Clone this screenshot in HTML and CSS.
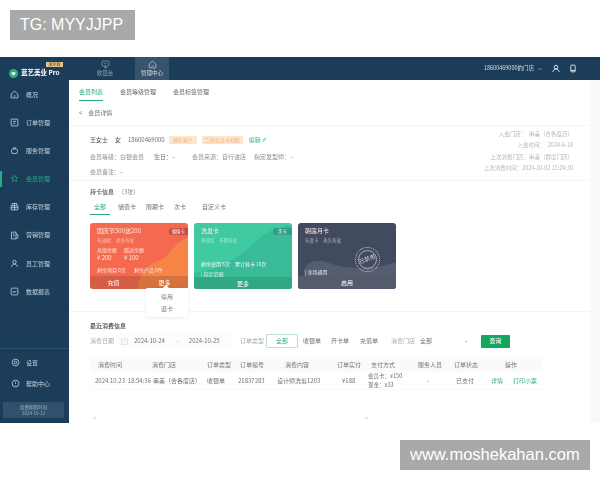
FILE: index.html
```html
<!DOCTYPE html>
<html lang="zh-CN">
<head>
<meta charset="utf-8">
<title>会员详情</title>
<link rel="stylesheet" href="styles.css">
</head>
<body>
<div class="mark mark-tg">TG: MYYJJPP</div>
<div class="app">
  <header class="topbar">
    <div class="brand">
      <svg class="brand-logo" viewBox="0 0 10 10"><circle cx="5" cy="5" r="5" fill="#27b083"/><path d="M2.800 3.600h4.400L6.600 6 5 7 3.400 6z" fill="#fff"/></svg>
      <span class="brand-name">蓝艺美业 Pro</span>
      <span class="brand-badge">演示版</span>
    </div>
    <nav class="top-tabs">
      <div class="top-tab">
        <svg class="top-icon" viewBox="0 0 12 12"><rect x="1.500" y="1.500" width="9" height="6.500" rx=".8"/><path d="M4 10.500h4M6 8v2.500M4.500 4l1.500 1.500L7.500 4"/></svg>
        <span>收银台</span>
      </div>
      <div class="top-tab top-tab-on">
        <svg class="top-icon" viewBox="0 0 12 12"><path d="M1.500 5.500 6 1.500l4.500 4v5h-9zM4.500 8h3"/></svg>
        <span>管理中心</span>
      </div>
    </nav>
    <div class="top-right">
      <span>18600469000的门店</span>
      <svg class="chev" viewBox="0 0 8 8"><path d="m1.500 3 2.500 2 2.500-2"/></svg>
      <svg class="top-tool" viewBox="0 0 10 10"><circle cx="5" cy="3.200" r="2.300"/><path d="M1 9.500c.4-2.500 2-3.800 4-3.800s3.600 1.300 4 3.800"/></svg>
      <svg class="top-tool" viewBox="0 0 10 10"><rect x="2.300" y=".8" width="5.400" height="8.400" rx=".8"/><path d="M2.300 7.500h5.400"/></svg>
    </div>
  </header>
  <div class="body">
    <aside class="side">
      <ul class="menu">
        <li class="menu-item"><svg class="menu-icon" viewBox="0 0 12 12"><path d="M1.500 5.500 6 1.500l4.500 4v5h-9zM4.500 8h3"/></svg>概况</li>
        <li class="menu-item"><svg class="menu-icon" viewBox="0 0 12 12"><rect x="1.500" y="1.500" width="9" height="9" rx=".6"/><path d="M4 4.500h4M4 7h3"/></svg>订单管理</li>
        <li class="menu-item"><svg class="menu-icon" viewBox="0 0 12 12"><rect x="2" y="4" width="8" height="6" rx="2.200"/><path d="M4.500 4V2.500h3V4"/></svg>服务管理</li>
        <li class="menu-item menu-on"><svg class="menu-icon" viewBox="0 0 12 12"><path d="m6 1.500 1.300 3 3.200.3-2.400 2.100.7 3.100L6 8.400 3.200 10l.7-3.100L1.500 4.800l3.200-.3z"/></svg>会员管理</li>
        <li class="menu-item"><svg class="menu-icon" viewBox="0 0 12 12"><path d="M1.500 5h9v5.500h-9zM3 5V2h6v3M6 2v8.500M1.500 7.500h9"/></svg>库存管理</li>
        <li class="menu-item"><svg class="menu-icon" viewBox="0 0 12 12"><path d="M2 1.500h6v9H2zM8 4l2.500 1v4L8 10M4 4h2M4 6.500h2"/></svg>营销管理</li>
        <li class="menu-item"><svg class="menu-icon" viewBox="0 0 12 12"><circle cx="6" cy="4" r="2.300"/><path d="M2 10.500c.5-2.300 2-3.500 4-3.500s3.500 1.200 4 3.500"/></svg>员工管理</li>
        <li class="menu-item"><svg class="menu-icon" viewBox="0 0 12 12"><rect x="1.500" y="1.500" width="9" height="9" rx="1.500"/><path d="m3.500 8 2-2.500 1.500 1.500 1.500-2"/></svg>数据报表</li>
      </ul>
      <div class="side-foot">
        <div class="foot-item"><svg class="menu-icon" viewBox="0 0 12 12"><circle cx="6" cy="6" r="4.500"/><circle cx="6" cy="6" r="1.800"/></svg>设置</div>
        <div class="foot-item"><svg class="menu-icon" viewBox="0 0 12 12"><circle cx="6" cy="6" r="4.500"/><path d="M6 3.500V6.500M6 8v.6"/></svg>帮助中心</div>
        <div class="expire"><span>续费期限时间</span><span>2024-10-12</span></div>
      </div>
    </aside>
    <main class="main">
      <div class="panel">
        <div class="sub-tabs">
          <span class="sub-tab sub-tab-on">会员列表</span>
          <span class="sub-tab">会员等级管理</span>
          <span class="sub-tab">会员标签管理</span>
        </div>
        <div class="crumb"><span class="crumb-back">&lt;</span><span>会员详情</span></div>
        <section class="info">
          <div class="info-left">
            <div class="info-row info-row-first">
              <strong>王女士</strong><strong>女</strong><span>18600469000</span>
              <span class="tag">潜在客户</span><span class="tag tag-wide">二档会员卡到期</span>
              <span class="edit">编辑 ✐</span>
            </div>
            <div class="info-row info-row-second">
              <span class="w-64">会员等级：白银会员</span>
              <span class="w-38">生日：–</span>
              <span class="w-62">会员来源：自行进店</span>
              <span>指定发型师：–</span>
            </div>
            <div class="info-row info-row-third">会员备注：–</div>
          </div>
          <div class="info-right">
            <span>入会门店：　串美（合各度店）</span>
            <span>入会时间：　2024-6-18</span>
            <span>上次消费门店：串美（群度门店）</span>
            <span>上次消费时间：2024-10-02 15:24:30</span>
          </div>
        </section>
        <section class="cards-sec">
          <h2 class="sec-title">持卡信息<em>（3张）</em></h2>
          <div class="card-tabs">
            <span class="card-tab card-tab-on">全部</span>
            <span class="card-tab">储值卡</span>
            <span class="card-tab">限期卡</span>
            <span class="card-tab">次卡</span>
            <span class="card-tab">自定义卡</span>
          </div>
          <div class="cards">
            <article class="card card-red">
              <svg class="wave" viewBox="0 0 98 66" preserveAspectRatio="none"><path d="M48 66c0-14 8-24 20-28 12-4 14-16 30-24v52z" fill="#f79a3f" opacity=".55"/></svg>
              <span class="card-kind">储值卡</span>
              <div class="card-body">
                <div class="card-title">国庆节500送200</div>
                <div class="card-sub">有效期：  终身有效</div>
                <div class="card-cols"><span>充值余额</span><span>赠送余额</span></div>
                <div class="card-cols card-money"><span>¥ 200</span><span>¥ 100</span></div>
                <div class="card-stat"><span>剩余项目 0次</span><span>剩余产品 0件</span></div>
              </div>
              <div class="card-foot"><span>充值</span><span class="foot-more">更多</span></div>
            </article>
            <article class="card card-green">
              <svg class="wave" viewBox="0 0 98 66" preserveAspectRatio="none"><path d="M0 66V50C30 46 50 30 62 18 72 8 85 4 98 2v64z" fill="#34a98c" opacity=".45"/></svg>
              <span class="card-kind card-kind-green">次卡</span>
              <div class="card-body">
                <div class="card-title">洗发卡</div>
                <div class="card-sub">多项目　不限有效</div>
                <div class="card-stat card-stat-green"><span>剩余使用 5次</span><span>累计耗卡 10次</span></div>
                <div class="card-note">| 指定范围</div>
              </div>
              <div class="card-foot"><span>更多</span></div>
            </article>
            <article class="card card-dark">
              <svg class="wave" viewBox="0 0 98 66" preserveAspectRatio="none"><path d="M6 53V46c6-10 16-10 28-5s40 6 64-2v27H6z" fill="#6a7282" opacity=".5"/></svg>
              <div class="stamp"><span>已禁用</span></div>
              <div class="card-body">
                <div class="card-title">朝露月卡</div>
                <div class="card-sub">年度卡　永久有效</div>
                <div class="card-note card-note-dark">| 全场通用</div>
              </div>
              <div class="card-foot"><span>启用</span></div>
            </article>
          </div>
          <div class="popover">
            <i class="pop-arrow"></i>
            <span>停用</span>
            <span>退卡</span>
          </div>
        </section>
        <section class="records">
          <h2 class="sec-title sec-title-dark">最近消费信息</h2>
          <div class="filters">
            <span class="f-label">消费日期</span>
            <div class="date-box">
              <svg class="cal" viewBox="0 0 8 8"><rect x=".5" y="1" width="7" height="6.500"/></svg>
              <span>2024-10-24</span><span class="dash">—</span><span>2024-10-25</span>
            </div>
            <span class="f-label f-type">订单类型</span>
            <span class="seg seg-on">全部</span>
            <span class="seg">收银单</span>
            <span class="seg seg-box"><span>开卡单</span><span>充值单</span></span>
            <span class="f-label f-shop">消费门店</span>
            <div class="select"><span>全部</span><i class="caret"></i></div>
            <button class="query" type="button">查询</button>
          </div>
          <div class="table">
            <div class="t-head">
              <span>消费时间</span><span>消费门店</span><span>订单类型</span><span>订单编号</span><span>消费内容</span><span>订单实付</span><span>支付方式</span><span>服务人员</span><span>订单状态</span><span>操作</span>
            </div>
            <div class="t-row">
              <span>2024.10.23&nbsp; 18:54:36</span><span>串美（合各度店）</span><span>收银单</span><span>21837283</span><span>设计师洗剪1203</span><span>¥188</span>
              <span class="pay"><span>会员卡：¥150</span><span>现金：¥33</span></span>
              <span>-</span><span>已支付</span>
              <span class="ops"><a>详情</a><a>打印小票</a></span>
            </div>
          </div>
          <div class="pager"><span>&lt;</span><span>&gt;</span></div>
        </section>
      </div>
    </main>
  </div>
</div>
<div class="mark mark-site">www.moshekahan.com</div>
</body>
</html>
```
FILE: styles.css
```css
* { box-sizing: border-box; }
html, body { margin: 0; padding: 0; }
body {
  position: relative;
  width: 600px;
  height: 480px;
  overflow: hidden;
  background: #fff;
  font-family: "Noto Sans CJK SC", "Noto Sans", sans-serif;
  font-size: 6px;
  line-height: 1.2;
  color: #5d6670;
}
ul { list-style: none; margin: 0; padding: 0; }
h2 { margin: 0; font-size: 6px; }
em { font-style: normal; }

.mark {
  position: absolute;
  z-index: 5;
  background: #a9a9a9;
  color: #fff;
  font-family: "Liberation Sans", sans-serif;
  display: flex;
  align-items: center;
}
.mark-tg { left: 10px; top: 10px; width: 125px; height: 30px; padding-left: 10px; font-size: 16px; }
.mark-site { left: 400px; top: 440px; width: 190px; height: 30px; padding-left: 10px; font-size: 16.500px; }

.app {
  margin-top: 57px;
  height: 366px;
  display: flex;
  flex-direction: column;
  background: #1c3d5a;
  filter: blur(.35px);
}

/* top bar */
.topbar { height: 23px; display: flex; align-items: stretch; color: #cfd8e0; flex: none; }
.brand { position: relative; width: 88px; display: flex; align-items: center; padding: 9px 0 0 9px; }
.brand-logo { width: 9px; height: 9px; margin-right: 3px; }
.brand-name { color: #fff; font-weight: 700; font-size: 6.500px; white-space: nowrap; }
.brand-badge {
  position: absolute; left: 46px; top: 5px; width: 17px; height: 5px;
  background: #e4c48a; color: #5a4320; font-size: 4px; line-height: 5px; text-align: center;
}
.top-tabs { display: flex; }
.top-tab {
  width: 34px; margin-right: 13px; display: flex; flex-direction: column; align-items: center; justify-content: center;
  gap: 1px; font-size: 5.500px; color: #8fa3b5;
}
.top-tab-on { background: #37536d; color: #d6dee5; }
.top-icon { width: 9px; height: 9px; fill: none; stroke: currentColor; stroke-width: .9; }
.top-right {
  margin-left: auto; display: flex; align-items: center; padding-right: 23px; color: #d5dee6; font-size: 5.500px;
}
.chev { width: 6px; height: 6px; margin-left: 3px; fill: none; stroke: #aab8c5; stroke-width: .8; }
.top-tool { width: 8px; height: 9px; margin-left: 9px; fill: none; stroke: #fff; stroke-width: 1; }

/* body */
.body { flex: 1; display: flex; min-height: 0; }
.side { width: 69px; flex: none; display: flex; flex-direction: column; color: #c8d3dd; }
.menu-item {
  position: relative; height: 28.200px; display: flex; align-items: center; padding-left: 10px; gap: 7px;
}
.menu-icon { width: 9px; height: 9px; flex: none; fill: none; stroke: #dbe3ea; stroke-width: .95; }
.menu-on { color: #25ad7f; }
.menu-on .menu-icon { stroke: #25ad7f; }
.menu-on::before { content: ""; position: absolute; left: 0; top: 6px; bottom: 6px; width: 1.500px; background: #25ad7f; }
.side-foot { margin-top: auto; border-top: 1px solid #2e5170; padding-top: 3px; }
.foot-item { height: 21px; display: flex; align-items: center; padding-left: 11px; gap: 6px; }
.expire {
  margin: 8px 5px 5px 3px; height: 16px; background: #31506b; color: #9fb0bf; font-size: 4.500px;
  display: flex; flex-direction: column; align-items: center; justify-content: center; line-height: 1.35;
}

/* main */
.main { flex: 1; background: #f8f9fa; min-width: 0; padding-right: 10px; }
.panel { position: relative; height: 100%; background: #fff; }
.sub-tabs { height: 21px; padding-left: 10px; display: flex; gap: 17px; align-items: stretch; font-size: 6px; color: #5d6670; }
.sub-tab { display: flex; align-items: center; padding-top: 3px; border-bottom: 1px solid transparent; }
.sub-tab-on { color: #2aa57a; border-bottom-color: #2aa57a; }
.crumb {
  height: 25px; padding-left: 10px; display: flex; align-items: center; gap: 6px;
  border-bottom: 1px solid #f4f5f6; color: #6a727a;
}
.crumb-back { color: #60686f; }

.info { height: 55px; padding: 0 17px 0 21px; display: flex; justify-content: space-between; border-bottom: 1px solid #f4f5f6; }
.info-row { display: flex; align-items: center; color: #8a9198; }
.info-row-first { margin-top: 8px; height: 11px; gap: 4px; color: #6c7379; }
.info-row-first strong { font-weight: 500; color: #50585f; margin-right: 3px; }
.info-row-second { margin-top: 6px; height: 11px; }
.info-row-third { margin-top: 4px; height: 11px; }
.tag { background: #fde6d0; color: #f2b27e; height: 8px; padding: 0 4px; line-height: 8px; font-size: 5px; }
.tag-wide { padding: 0 3px; margin-left: 1px; }
.edit { color: #3eb08a; margin-left: 2px; }
.w-64 { width: 64px; }
.w-38 { width: 38px; color: #6c7379; }
.w-62 { width: 62px; }
.info-right {
  display: flex; flex-direction: column; align-items: flex-end; padding-top: 5px; gap: 4.400px;
  color: #b1b6bb; font-size: 5.500px; line-height: 7px;
}

.cards-sec { position: relative; height: 131px; padding: 7px 0 0 21px; border-bottom: 1px solid #f4f5f6; }
.sec-title { font-weight: 500; color: #50585f; line-height: 8px; }
.sec-title em { font-weight: 400; color: #858c93; margin-left: 4px; }
.card-tabs { margin-top: 6px; height: 13px; display: flex; color: #6c7379; }
.card-tab { width: 28px; padding-left: 0; display: flex; align-items: flex-start; padding-top: 1px; }
.card-tab-on { color: #2aa57a; width: 20px; margin-right: 8px; padding-left: 4px; border-bottom: 1px solid #2aa57a; }
.cards { margin-top: 8px; display: flex; gap: 6px; }
.card {
  position: relative; width: 98px; height: 66px; border-radius: 3px; overflow: hidden; color: #fff;
  display: flex; flex-direction: column;
}
.card-red { background: #f4694f; }
.card-green { background: #3fcaa2; }
.card-dark { background: #414a5e; }
.wave { position: absolute; inset: 0; width: 100%; height: 100%; }
.card-body { position: relative; flex: 1; padding: 4px 0 0 7px; }
.card-title { font-size: 6px; line-height: 8px; color: #ffe9de; }
.card-sub { font-size: 4.500px; line-height: 6px; margin-top: 2px; opacity: .55; }
.card-cols { display: flex; margin-top: 4px; font-size: 5px; line-height: 6px; color: #ffe6d6; }
.card-cols span { width: 27px; }
.card-money { margin-top: 2px; font-size: 6px; color: #ffeee4; }
.card-stat { display: flex; gap: 8px; margin-top: 6px; font-size: 5px; line-height: 6px; color: #ffe6d6; }
.card-stat-green { margin-top: 18px; gap: 5px; color: #eafff8; }
.card-note { margin-top: 4px; font-size: 5px; line-height: 6px; opacity: .85; }
.card-note-dark { margin-top: 26px; }
.card-foot {
  position: relative; height: 13px; flex: none; display: flex; align-items: center; justify-content: space-around;
  background: rgba(120, 60, 40, .25);
}
.card-green .card-foot { background: #2fa883; }
.card-dark .card-foot { background: #535b6c; }
.foot-more { padding-left: 4px; }
.card-kind {
  position: absolute; z-index: 1; right: 0; top: 5px; height: 7px; padding: 0 3px; font-size: 4.500px; line-height: 7px;
  border-radius: 3px 0 0 3px; background: #c94a3e;
}
.card-kind-green { background: #2f9d88; padding: 0 5px; }
.stamp {
  position: absolute; z-index: 1; left: 57px; top: 24px; width: 25px; height: 25px; border-radius: 50%;
  border: 1.500px dotted #cfd3da; outline: .7px solid #aab0ba; outline-offset: -4px;
  display: flex; align-items: center; justify-content: center;
  color: #d5d9df; font-size: 5.500px; white-space: nowrap;
}
.stamp span { transform: rotate(-20deg); }
.popover {
  position: absolute; z-index: 2; left: 77px; top: 107px; width: 42px; height: 29px;
  background: #fff; box-shadow: 0 1px 4px rgba(0, 0, 0, .08); border-radius: 1px;
  display: flex; flex-direction: column; align-items: center; justify-content: space-around; padding: 2px 0; color: #7d848a;
}
.pop-arrow {
  position: absolute; left: 17px; top: -3px; width: 0; height: 0;
  border: 3px solid transparent; border-top: 0; border-bottom-color: #fff;
}

.records { padding: 10px 0 0 21px; }
.sec-title-dark { color: #40484f; }
.filters { margin-top: 4px; height: 14px; display: flex; align-items: center; color: #6c7379; }
.f-label { color: #a8adb2; width: 29px; flex: none; }
.date-box { width: 112px; height: 12px; display: flex; align-items: center; background: #fdfdfd; padding-left: 2px; flex: none; box-shadow: 0 0 1px #eceeef; }
.cal { width: 7px; height: 7px; margin-right: 6px; fill: #f5f6f7; stroke: #d2d5d8; stroke-width: .6; }
.dash { width: 24px; text-align: center; color: #c5c9cc; }
.f-type { margin-left: 9px; width: 26px; }
.seg { flex: none; }
.seg-on { width: 32px; height: 14px; line-height: 12px; text-align: center; border: 1px solid #bcdfd1; border-radius: 1px; color: #38ab82; }
.seg-on + .seg { margin-left: 5px; }
.seg-box { margin-left: 10px; display: flex; gap: 11px; margin-right: 13px; }
.f-shop { width: 29px; }
.select { width: 52px; height: 12px; display: flex; align-items: center; justify-content: space-between; padding: 0 5px 0 0; flex: none; }
.caret { width: 0; height: 0; border: 1.500px solid transparent; border-top-color: #777; border-bottom: 0; }
.query {
  margin-left: 9px; width: 29px; height: 13px; border: 0; border-radius: 1px; padding: 0;
  background: #13a65f; color: #fff; font: inherit; font-weight: 500; flex: none;
}
.table { margin-top: 9px; width: 453px; }
.t-head, .t-row { display: grid; align-items: center; white-space: nowrap; }
.t-head {
  height: 15px; background: #fafafa; color: #70777d;
  grid-template-columns: 54px 55px 33px 45px 52px 34px 47px 36px 51px auto; padding-left: 8px;
}
.t-row {
  height: 18px; border-bottom: 1px solid #f7f8f8; color: #6c7379;
  grid-template-columns: 58px 54px 31px 39px 65px 26px 59px 29px 35px auto; padding-left: 5px;
}
.pay { display: flex; flex-direction: column; line-height: 1.5; font-size: 5.500px; }
.ops { display: flex; gap: 10px; }
.ops a { color: #41b08c; }
.pager { margin-top: 24px; width: 278px; padding-left: 3px; display: flex; justify-content: space-between; color: #c4c7ca; font-size: 6px; }
```
